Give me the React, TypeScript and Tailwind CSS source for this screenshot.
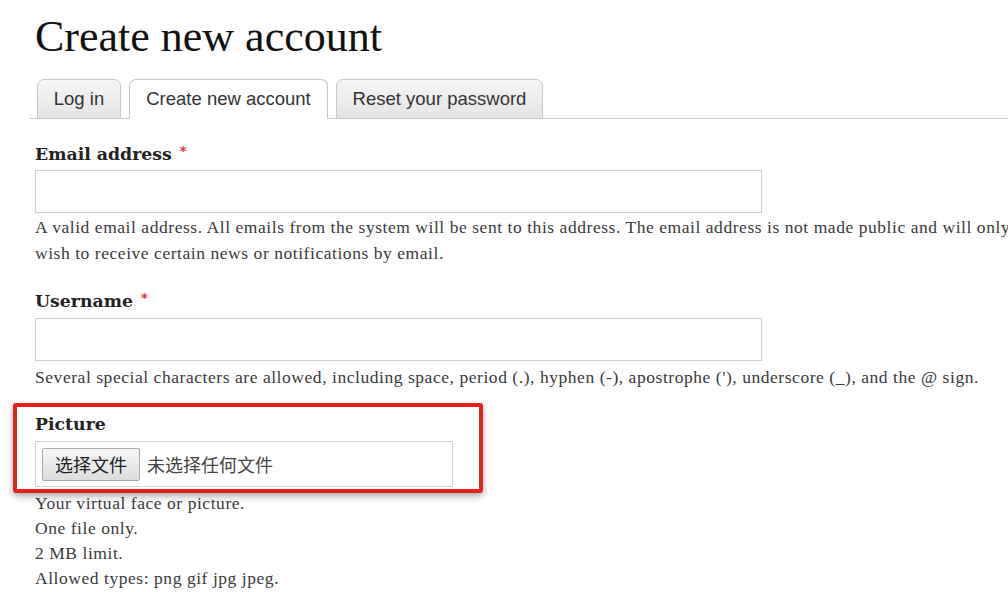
import React from 'react';

const serif = "font-['Liberation_Serif','Times_New_Roman',serif]";
const labelFont = "font-['DejaVu_Serif',Georgia,serif]";
const sans = "font-['Liberation_Sans',Arial,sans-serif]";
const cjk = "font-['Noto_Sans_CJK_SC','Noto_Sans',sans-serif]";

const tabs = [
    { name: 'Log in', width: 'w-[84px]', active: false },
    { name: 'Create new account', width: 'w-[199px]', active: true },
    { name: 'Reset your password', width: 'w-[207px]', active: false },
];

function Label({ text, required }: { text: string; required?: boolean }) {
    return (
        <div className={`${labelFont} h-[24px] text-[17.3px] font-bold leading-[24px] text-[#222]`}>
            {text}
            {required && <span className="relative -top-[4px] ml-[8px] text-[13px] text-[#e0161b]">*</span>}
        </div>
    );
}

export default function App() {
    return (
        <div className="h-[592px] w-[1008px] overflow-hidden bg-white">
            <div className="pt-[12px]">
                {/* Title */}
                <h1 className={`${serif} pl-[35px] text-[44px] leading-[50px] text-[#111]`}>Create new account</h1>

                {/* Tabs */}
                <ul className={`${sans} ml-[30px] mt-[17px] flex h-[40px] items-end gap-[8px] border-b border-[#c8c8c8] pl-[7px]`}>
                    {tabs.map((tab) => (
                        <li
                            key={tab.name}
                            className={`${tab.width} -mb-px flex h-[40px] items-center justify-center rounded-t-[7px] border text-[18.5px] text-[#333] ${
                                tab.active
                                    ? 'border-[#c8c8c8] border-b-white bg-white'
                                    : 'border-[#c8c8c8] bg-gradient-to-b from-[#f6f6f6] to-[#e4e4e4]'
                            }`}
                        >
                            {tab.name}
                        </li>
                    ))}
                </ul>

                {/* Form */}
                <div className="pl-[35px]">
                    <div className="mt-[23px]">
                        <Label text="Email address" required />
                        <div className="mt-[4px] h-[43px] w-[727px] border border-[#cfcfcf] bg-white" />
                        <p className={`${serif} mt-[1px] w-[1095px] text-[17.5px] leading-[26px] tracking-[0.55px] text-[#3a3a3a]`}>
                            A valid email address. All emails from the system will be sent to this address. The email address is not made public and will only be used if you wish to receive certain news or notifications by email.
                        </p>
                    </div>

                    <div className="mt-[23px]">
                        <Label text="Username" required />
                        <div className="mt-[5px] h-[43px] w-[727px] border border-[#cfcfcf] bg-white" />
                        <p className={`${serif} mt-[3px] w-[1095px] text-[17.5px] leading-[26px] tracking-[0.55px] text-[#3a3a3a]`}>
                            Several special characters are allowed, including space, period (.), hyphen (-), apostrophe ('), underscore (_), and the @ sign.
                        </p>
                    </div>

                    <div className="relative mt-[22px]">
                        <Label text="Picture" />
                        <div className="mt-[5px] flex h-[46px] w-[418px] items-center border border-[#d4d4d4] bg-white pl-[6px]">
                            <button className={`${cjk} h-[33px] w-[98px] rounded-[2px] border border-[#a9a9a9] bg-gradient-to-b from-[#f7f7f7] to-[#dcdcdc] text-[18px] leading-none text-[#222]`}>
                                选择文件
                            </button>
                            <span className={`${cjk} ml-[7px] text-[18px] text-[#444]`}>未选择任何文件</span>
                        </div>
                        {/* annotation box */}
                        <div className="pointer-events-none absolute -left-[22px] -top-[9px] h-[90px] w-[470px] rounded-[3px] border-[4px] border-[#e2231a] shadow-[0_3px_7px_rgba(0,0,0,0.35)]" />
                        <div className={`${serif} mt-[4px] text-[17.5px] leading-[25px] tracking-[0.55px] text-[#3a3a3a]`}>
                            <div>Your virtual face or picture.</div>
                            <div>One file only.</div>
                            <div>2 MB limit.</div>
                            <div>Allowed types: png gif jpg jpeg.</div>
                        </div>
                    </div>
                </div>
            </div>
        </div>
    );
}
